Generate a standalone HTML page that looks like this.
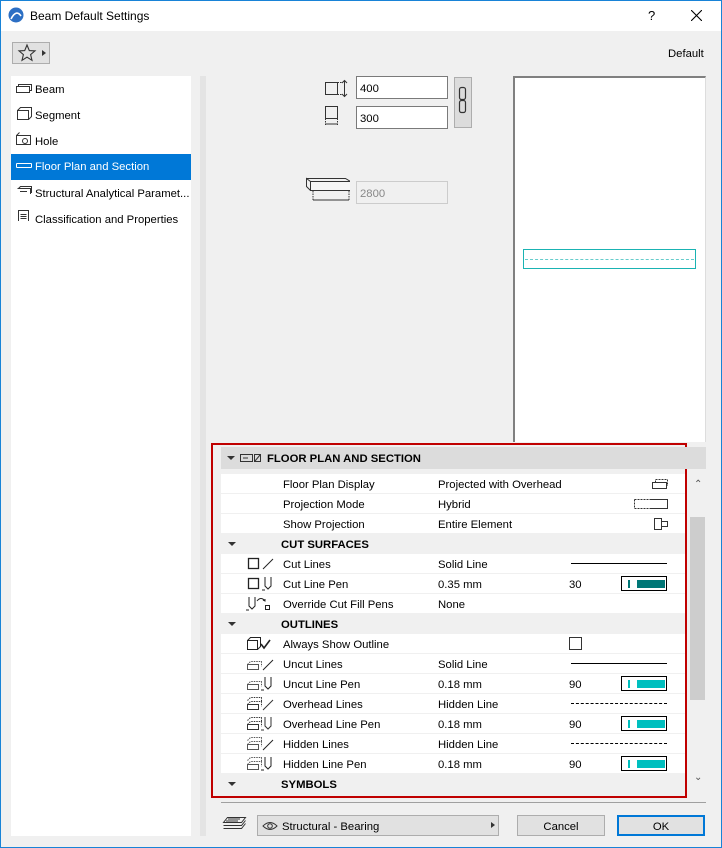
<!DOCTYPE html>
<html><head><meta charset="utf-8"><style>
*{box-sizing:border-box;margin:0;padding:0}
body{width:722px;height:848px;overflow:hidden;background:#f0f0f0;font-family:"Liberation Sans",sans-serif;font-size:11.3px;color:#000;position:relative}
.a{position:absolute}
.win{left:0;top:0;width:722px;height:848px;border:1px solid #1883d7}
.title{left:1px;top:1px;width:720px;height:30px;background:#fff}
.list{left:11px;top:76px;width:180px;height:760px;background:#fff}
.li{position:absolute;left:0;width:180px;height:24px;line-height:26px;padding-left:24px;color:#000}
.li.sel{background:#0078d7;color:#fff}
.inp{background:#fff;border:1px solid #7a7a7a;height:23px;line-height:24px;padding-left:3px}
.row{position:absolute;left:221px;width:464px;height:19px;background:#fff;line-height:23px}
.sec{background:#f0f0f0;font-weight:bold}
.l{position:absolute;left:62px}
.v{position:absolute;left:217px}
.n{position:absolute;left:348px}
.pen{position:absolute;left:400px;top:2px;width:46px;height:15px;border:1px solid #000;background:#fff}
.pen i{position:absolute;left:6px;top:3px;width:2px;height:8px;background:#00bfbf}
.pen b{position:absolute;left:15px;top:3px;width:28px;height:8px;background:#00bfbf}
.tri{position:absolute;left:7px;top:8px;width:0;height:0;border-left:4px solid transparent;border-right:4px solid transparent;border-top:4px solid #333}
.ic{position:absolute;left:24px;top:2px}
.btn{background:#e1e1e1;border:1px solid #adadad;text-align:center;line-height:22px;height:21px}
</style></head><body>
<div class="a win"></div>
<div class="a title"></div>
<svg class="a" style="left:8px;top:7px" width="16" height="16"><circle cx="8" cy="8" r="7.5" fill="#2c6fc4"/><path d="M3 12 Q8 2 13 9" stroke="#fff" stroke-width="1.6" fill="none"/></svg>
<div class="a" style="left:30px;top:9px;font-size:12px">Beam Default Settings</div>
<div class="a" style="left:648px;top:8px;font-size:13px">?</div>
<svg class="a" style="left:691px;top:10px" width="11" height="11"><path d="M0 0L11 11M11 0L0 11" stroke="#000" stroke-width="1.1"/></svg>
<div class="a" style="left:12px;top:42px;width:38px;height:22px;border:1px solid #adadad;background:#e1e1e1"></div>
<svg class="a" style="left:17px;top:43px" width="20" height="20"><path d="M10 2L12.3 7.6 18 7.9 13.6 11.6 15 17.3 10 14.2 5 17.3 6.4 11.6 2 7.9 7.7 7.6Z" fill="none" stroke="#333" stroke-width="1.1"/></svg>
<div class="a" style="left:42px;top:50px;border-top:3.5px solid transparent;border-bottom:3.5px solid transparent;border-left:4px solid #333"></div>
<div class="a" style="left:668px;top:48px">Default</div>
<div class="a" style="left:200px;top:76px;width:6px;height:760px;background:#e4e4e4"></div>
<div class="a list">
<div class="li" style="top:1px">Beam</div>
<div class="li" style="top:27px">Segment</div>
<div class="li" style="top:53px">Hole</div>
<div class="li sel" style="top:78px;height:26px;line-height:26px">Floor Plan and Section</div>
<div class="li" style="top:105px">Structural Analytical Paramet...</div>
<div class="li" style="top:131px">Classification and Properties</div>
<svg class="a" style="left:3px;top:5px" width="20" height="140"><g fill="none" stroke="#333" stroke-width="1"><rect x="2.5" y="5.5" width="13" height="6"/><path d="M4.5 5.5V3.5H17.5V9.5H15.5"/><rect x="3.5" y="29.5" width="11" height="9"/><path d="M3.5 29.5L6.5 26.5H17.5V35.5L14.5 38.5"/><path d="M2.5 54.5H16.5V63.5H2.5ZM2.5 54.5L5.5 51.5"/><circle cx="11" cy="60" r="2.5"/><path d="M2.5 82.5H17.5M2.5 86.5H17.5M2.5 82.5V86.5M17.5 82.5V86.5" stroke="#fff"/><path d="M3.5 107.5H16.5V113M4.5 107.5L6.5 105.5H17.5V112M6 110.5H13" /><rect x="4.5" y="129.5" width="10" height="12"/><path d="M6.5 133.5h6M6.5 135.5h6M6.5 137.5h6"/></g></svg>
</div>
<svg class="a" style="left:323px;top:78px" width="30" height="55"><g fill="none" stroke="#333" stroke-width="1"><rect x="2.5" y="4.5" width="12" height="12"/><path d="M14.5 4.5h4M14.5 16.5h4" stroke-dasharray="1.5 1"/><path d="M21.5 3v15M19 5l2.5-2.5 2.5 2.5M19 16l2.5 2.5 2.5-2.5"/><rect x="2.5" y="28.5" width="12" height="12"/><path d="M2.5 40.5v7M14.5 40.5v7" stroke-dasharray="1.5 1"/><path d="M3 46h11"/></g></svg>
<div class="a inp" style="left:356px;top:76px;width:92px">400</div>
<div class="a inp" style="left:356px;top:106px;width:92px">300</div>
<div class="a" style="left:454px;top:77px;width:18px;height:51px;background:#dcdcdc;border:1px solid #adadad"></div>
<svg class="a" style="left:458px;top:86px" width="10" height="30"><g fill="none" stroke="#333" stroke-width="1.2"><rect x="1.5" y="1.5" width="6" height="12" rx="2"/><rect x="1.5" y="14.5" width="6" height="12" rx="2"/></g></svg>
<svg class="a" style="left:305px;top:176px" width="45" height="30"><g fill="none" stroke="#333" stroke-width="1"><rect x="5.5" y="5.5" width="40" height="9" fill="#f6f6f6"/><path d="M5.5 14.5L1.5 10.5V2.5L5.5 5.5M1.5 2.5H40.5L45.5 5.5"/><path d="M8 15v10M44 15v10" stroke-dasharray="1.5 1"/><path d="M8 24h36"/></g></svg>
<div class="a inp" style="left:356px;top:181px;width:92px;background:#f0f0f0;border-color:#ccc;color:#888">2800</div>
<div class="a" style="left:513px;top:76px;width:193px;height:366px;background:#fff;border-left:2px solid #808080;border-top:2px solid #808080;border-right:1px solid #ddd"></div>
<div class="a" style="left:523px;top:249px;width:173px;height:20px;border:1px solid #1ab3b3"></div>
<div class="a" style="left:525px;top:259px;width:169px;border-top:1px dashed #6cc"></div>
<div class="a" style="left:211px;top:443px;width:476px;height:355px;border:2px solid #c00000"></div>
<div class="a" style="left:221px;top:447px;width:485px;height:22px;background:#dcdcdc"></div>
<div class="a" style="left:227px;top:456px;border-left:4px solid transparent;border-right:4px solid transparent;border-top:4px solid #333"></div>
<svg class="a" style="left:240px;top:452px" width="24" height="12"><g fill="none" stroke="#333" stroke-width="1"><rect x="0.5" y="2.5" width="12" height="7"/><path d="M3 6h5"/><rect x="14.5" y="2.5" width="6" height="7"/><path d="M15 9l5-6"/></g></svg>
<div class="a" style="left:267px;top:453px;font-weight:bold">FLOOR PLAN AND SECTION</div>
<div class="a" style="left:690px;top:470px;width:16px;height:326px;background:#f0f0f0"></div>
<div class="a" style="left:690px;top:517px;width:15px;height:183px;background:#cdcdcd"></div>
<div class="a" style="left:694px;top:479px;font-size:10px;color:#555">&#8963;</div>
<div class="a" style="left:694px;top:772px;font-size:10px;color:#555">&#8964;</div>

<div class="row" style="top:474px"><span class="l">Floor Plan Display</span><span class="v">Projected with Overhead</span><svg class="a" style="left:430px;top:2px" width="18" height="15"><g fill="none" stroke="#333"><rect x="1.5" y="6.5" width="14" height="6"/><path d="M4.5 6.5V3.5H16.5V10" stroke-dasharray="2 1"/></g></svg></div>
<div class="row" style="top:494px"><span class="l">Projection Mode</span><span class="v">Hybrid</span><svg class="a" style="left:412px;top:4px" width="36" height="12"><g fill="none" stroke="#333"><path d="M1.5 1.5H18M1.5 10.5H18M1.5 1.5V10.5" stroke-dasharray="2 1"/><path d="M18 1.5H34.5V10.5H18"/></g></svg></div>
<div class="row" style="top:514px"><span class="l">Show Projection</span><span class="v">Entire Element</span><svg class="a" style="left:431px;top:2px" width="18" height="15"><g fill="none" stroke="#333"><path d="M2.5 2.5H9.5V13.5H2.5ZM9.5 5.5H15.5V10.5H9.5"/></g></svg></div>
<div class="row sec" style="top:534px"><div class="tri"></div><span class="l" style="left:60px">CUT SURFACES</span></div>
<div class="row" style="top:554px"><svg class="ic" width="36" height="15"><g fill="none" stroke="#222" stroke-width="1.3"><rect x="3.5" y="2.5" width="10" height="10"/><path d="M18 13L28 3" stroke-width="1"/></g></svg><span class="l">Cut Lines</span><span class="v">Solid Line</span><div class="a" style="left:350px;top:9px;width:96px;border-top:1px solid #000"></div></div>
<div class="row" style="top:574px"><svg class="ic" width="36" height="15"><g fill="none" stroke="#222" stroke-width="1.3"><rect x="3.5" y="2.5" width="10" height="10"/><path d="M20 1v9l3 3 3-3V1M17 14h3" stroke-width="1"/></g></svg><span class="l">Cut Line Pen</span><span class="v">0.35 mm</span><span class="n">30</span><div class="pen"><i style="background:#007777"></i><b style="background:#007777"></b></div></div>
<div class="row" style="top:594px"><svg class="ic" width="36" height="15"><g fill="none" stroke="#222" stroke-width="1"><path d="M4 1v9l3 3 3-3V1M1 14h3M12 5q4-5 8 0M18 4l2 1 0-2"/><rect x="20.5" y="9.5" width="4" height="4"/></g></svg><span class="l">Override Cut Fill Pens</span><span class="v">None</span></div>
<div class="row sec" style="top:614px"><div class="tri"></div><span class="l" style="left:60px">OUTLINES</span></div>
<div class="row" style="top:634px"><svg class="ic" width="36" height="15"><g fill="none" stroke="#222" stroke-width="1"><rect x="2.5" y="4.5" width="10" height="9"/><path d="M2.5 4.5L5.5 1.5H15.5V10.5L12.5 13.5"/><path d="M16 8l3 4 6-8" stroke-width="1.6"/></g></svg><span class="l">Always Show Outline</span><div class="a" style="left:348px;top:3px;width:13px;height:13px;border:1px solid #333;background:#fff"></div></div>
<div class="row" style="top:654px"><svg class="ic" width="36" height="15"><g fill="none" stroke="#555" stroke-width="1"><path d="M2.5 8.5h11v5h-11z"/><path d="M2.5 8.5l3-3h11v5" stroke-dasharray="1.5 1"/><path d="M18 14L28 4" stroke="#222"/></g></svg><span class="l">Uncut Lines</span><span class="v">Solid Line</span><div class="a" style="left:350px;top:9px;width:96px;border-top:1px solid #000"></div></div>
<div class="row" style="top:674px"><svg class="ic" width="36" height="15"><g fill="none" stroke="#555" stroke-width="1"><path d="M2.5 8.5h11v5h-11z"/><path d="M2.5 8.5l3-3h11v5" stroke-dasharray="1.5 1"/><path d="M20 1v9l3 3 3-3V1M16 14h3" stroke="#222"/></g></svg><span class="l">Uncut Line Pen</span><span class="v">0.18 mm</span><span class="n">90</span><div class="pen"><i></i><b></b></div></div>
<div class="row" style="top:694px"><svg class="ic" width="36" height="15"><g fill="none" stroke="#333" stroke-width="1"><path d="M2.5 8.5h11v5h-11z"/><path d="M2.5 8.5l3-3h11v5M2.5 4.5l3-3h11v5" stroke-dasharray="1.5 1"/><path d="M18 14L28 4"/></g></svg><span class="l">Overhead Lines</span><span class="v">Hidden Line</span><div class="a" style="left:350px;top:9px;width:96px;border-top:1px dashed #000"></div></div>
<div class="row" style="top:714px"><svg class="ic" width="36" height="15"><g fill="none" stroke="#333" stroke-width="1"><path d="M2.5 8.5h11v5h-11z"/><path d="M2.5 8.5l3-3h11v5M2.5 4.5l3-3h11v5" stroke-dasharray="1.5 1"/><path d="M20 1v9l3 3 3-3V1M16 14h3"/></g></svg><span class="l">Overhead Line Pen</span><span class="v">0.18 mm</span><span class="n">90</span><div class="pen"><i></i><b></b></div></div>
<div class="row" style="top:734px"><svg class="ic" width="36" height="15"><g fill="none" stroke="#555" stroke-width="1"><path d="M2.5 8.5h11v5h-11z"/><path d="M2.5 8.5l3-3h11v5M2.5 4.5l3-3h11v5" stroke-dasharray="1.5 1"/><path d="M18 14L28 4" stroke="#222"/></g></svg><span class="l">Hidden Lines</span><span class="v">Hidden Line</span><div class="a" style="left:350px;top:9px;width:96px;border-top:1px dashed #000"></div></div>
<div class="row" style="top:754px"><svg class="ic" width="36" height="15"><g fill="none" stroke="#555" stroke-width="1"><path d="M2.5 8.5h11v5h-11z"/><path d="M2.5 8.5l3-3h11v5M2.5 4.5l3-3h11v5" stroke-dasharray="1.5 1"/><path d="M20 1v9l3 3 3-3V1M16 14h3" stroke="#222"/></g></svg><span class="l">Hidden Line Pen</span><span class="v">0.18 mm</span><span class="n">90</span><div class="pen"><i></i><b></b></div></div>
<div class="row sec" style="top:774px;height:20px"><div class="tri"></div><span class="l" style="left:60px">SYMBOLS</span></div>

<div class="a" style="left:221px;top:802px;width:485px;border-top:1px solid #a0a0a0"></div>
<svg class="a" style="left:222px;top:816px" width="26" height="18"><g fill="none" stroke="#333"><path d="M5.5 1.5h18l-4 5h-18zM1.5 9.5h18l4-5M1.5 12.5h18l4-5M6 3h12M4 5h12"/></g></svg>
<div class="a btn" style="left:257px;top:815px;width:242px;text-align:left;padding-left:24px">Structural - Bearing</div>
<svg class="a" style="left:262px;top:820px" width="16" height="12"><path d="M1 6Q8 -1 15 6Q8 13 1 6Z" fill="none" stroke="#333"/><circle cx="8" cy="6" r="2.3" fill="none" stroke="#333"/></svg>
<div class="a" style="left:491px;top:822px;border-top:3.5px solid transparent;border-bottom:3.5px solid transparent;border-left:4px solid #333"></div>
<div class="a btn" style="left:517px;top:815px;width:88px">Cancel</div>
<div class="a btn" style="left:617px;top:815px;width:88px;border:2px solid #0078d7;line-height:20px">OK</div>
</body></html>
